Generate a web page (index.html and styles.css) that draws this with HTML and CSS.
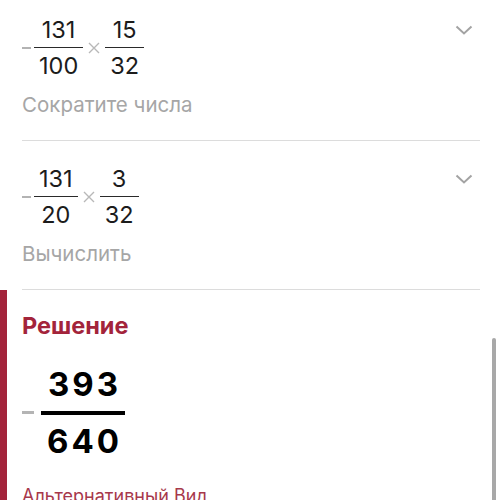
FILE: index.html
```html
<!DOCTYPE html>
<html lang="ru">
<head>
  <meta charset="UTF-8" />
  <meta name="viewport" content="width=device-width, initial-scale=1" />
  <title>Решение</title>
  <link rel="stylesheet" href="styles.css">
</head>
<body>
  <div class="steps">
    <section class="step">
      <div class="step-body">
        <div class="expr">
          <span class="minus"></span>
          <span class="frac"><span class="num">131</span><span class="bar"></span><span class="num">100</span></span>
          <svg class="times" width="12" height="12" viewBox="0 0 12 12"><path d="M1 1L11 11M11 1L1 11"/></svg>
          <span class="frac"><span class="num">15</span><span class="bar"></span><span class="num">32</span></span>
        </div>
        <p class="hint">Сократите числа</p>
      </div>
      <svg class="chevron" width="18" height="10" viewBox="0 0 18 10"><path d="M1.5 1.5L9 8.5L16.5 1.5"/></svg>
    </section>
    <section class="step">
      <div class="step-body">
        <div class="expr">
          <span class="minus"></span>
          <span class="frac"><span class="num">131</span><span class="bar"></span><span class="num">20</span></span>
          <svg class="times" width="12" height="12" viewBox="0 0 12 12"><path d="M1 1L11 11M11 1L1 11"/></svg>
          <span class="frac"><span class="num">3</span><span class="bar"></span><span class="num">32</span></span>
        </div>
        <p class="hint">Вычислить</p>
      </div>
      <svg class="chevron" width="18" height="10" viewBox="0 0 18 10"><path d="M1.5 1.5L9 8.5L16.5 1.5"/></svg>
    </section>
  </div>

  <section class="solution">
    <h2>Решение</h2>
    <div class="answer">
      <span class="big-minus"></span>
      <span class="big-frac"><span class="big-num">393</span><span class="big-bar"></span><span class="big-num">640</span></span>
    </div>
    <a class="alt-link">Альтернативный Вид</a>
  </section>

  <div class="scrollbar"></div>
</body>
</html>
```

FILE: styles.css
```css
html {
  overflow: hidden;
}
body {
  margin: 0;
  background: #fff;
  font-family: Inter, "Noto Sans", sans-serif;
  color: #1c1c1c;
}
.steps {
  margin: 0 20px 0 22px;
}
.step {
  display: flex;
  justify-content: space-between;
  align-items: flex-start;
  padding: 24px 0 23px;
  border-bottom: 1px solid #dcdcdc;
}
.step:first-child {
  padding-top: 16px;
}
.expr {
  display: flex;
  align-items: center;
}
.minus {
  width: 9px;
  height: 2px;
  background: #b3b3b3;
  margin-right: 3px;
}
.frac {
  display: inline-flex;
  flex-direction: column;
  align-items: stretch;
  text-align: center;
}
.num {
  font-size: 23.5px;
  line-height: 27px;
  padding: 0 5px;
}
.bar {
  height: 1px;
  background: #2a2a2a;
  margin: 4px 0;
}
.times {
  margin: 0 5px;
  fill: none;
  stroke: #b8b8b8;
  stroke-width: 1.4;
}
.hint {
  margin: 14px 0 0;
  font-size: 20.5px;
  line-height: 24px;
  color: #a6a6a6;
}
.chevron {
  margin-top: 9px;
  margin-right: 7px;
  fill: none;
  stroke: #a3a3a3;
  stroke-width: 2;
}
.solution {
  border-left: 7px solid #a3243b;
  padding: 23px 0 0 15px;
}
.solution h2 {
  margin: 0;
  font-size: 23.5px;
  line-height: 26px;
  font-weight: 700;
  color: #a3243b;
}
.answer {
  display: flex;
  align-items: center;
  margin-top: 26px;
}
.big-minus {
  width: 12px;
  height: 3px;
  background: #b4b4b4;
  margin-right: 7px;
}
.big-frac {
  display: inline-flex;
  flex-direction: column;
  text-align: center;
}
.big-num {
  font-size: 33px;
  line-height: 38px;
  font-weight: 700;
  color: #000;
  padding: 0 3px 0 6px;
  letter-spacing: 3px;
}
.big-bar {
  height: 4px;
  background: #000;
  margin: 8px 0 7px;
}
.alt-link {
  display: block;
  margin-top: 25px;
  font-size: 18px;
  line-height: 22px;
  color: #a7384b;
}
.scrollbar {
  position: fixed;
  right: 4px;
  top: 338px;
  width: 4px;
  height: 200px;
  border-radius: 2px;
  background: #a8a8a8;
}
```
